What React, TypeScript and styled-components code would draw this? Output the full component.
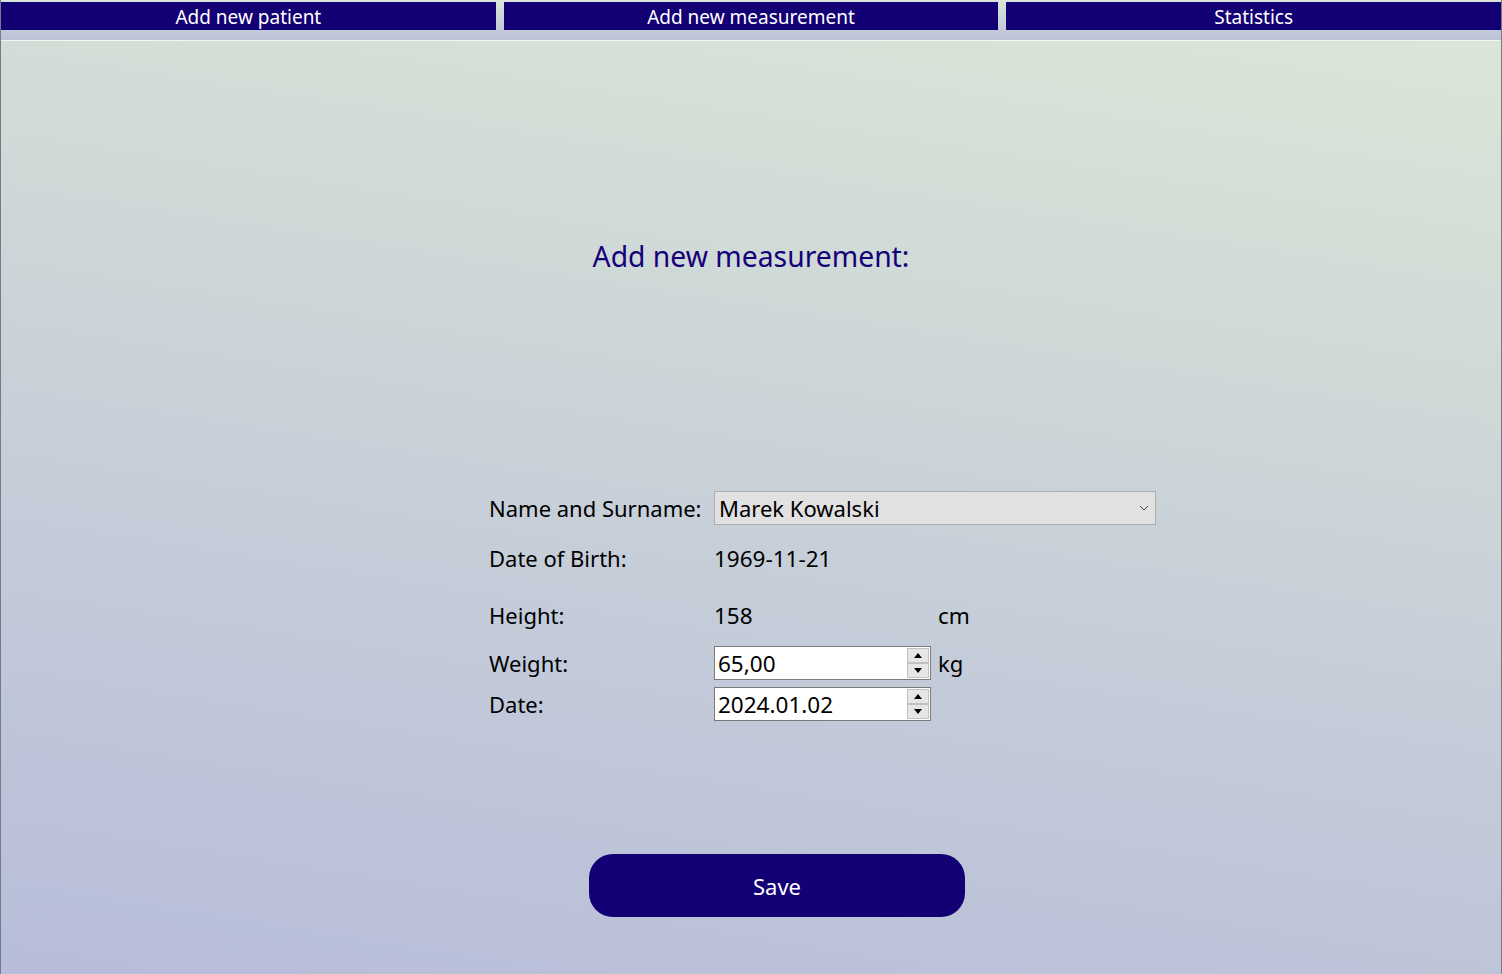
import React from "react";
import styled, { createGlobalStyle } from "styled-components";

const Global = createGlobalStyle`
  html, body { margin: 0; padding: 0; }
  body { font-family: "Noto Sans", "Open Sans", sans-serif; }
  #root { height: 974px; }
`;

const Window = styled.div`
  height: 974px;
  display: flex;
  flex-direction: column;
  border-left: 1px solid #6f7f87;
  border-right: 1px solid #6f7f87;
  box-sizing: border-box;
`;

const Header = styled.div`
  height: 41px;
  box-sizing: border-box;
  padding-top: 2px;
  background: linear-gradient(180deg, #dbe5d9 0%, #c6cedb 60%, #bcc3d6 100%);
  border-bottom: 1px solid #f4f6f4;
  display: grid;
  grid-template-columns: 1fr 1fr 1fr;
  column-gap: 8px;
  align-items: start;
`;

const NavButton = styled.button`
  height: 28px;
  box-sizing: border-box;
  border: none;
  margin: 0;
  padding: 2px 0 0 0;
  background: #130075;
  color: #ffffff;
  font-family: "Noto Sans", "Open Sans", sans-serif;
  font-size: 19px;
  line-height: 26px;
  cursor: pointer;
`;

const Main = styled.main`
  flex: 1;
  background: linear-gradient(189deg, #dbe6d8 0%, #d0dad7 28%, #c5cdd9 58%, #b7bdd9 100%);
  display: flex;
  flex-direction: column;
`;

const Title = styled.h1`
  margin: 197px 0 0 0;
  text-align: center;
  font-family: "Noto Sans", "Open Sans", sans-serif;
  font-weight: 400;
  font-size: 28.3px;
  line-height: 36px;
  color: #15007a;
`;

const Form = styled.div`
  margin: 217px 0 0 488px;
  display: flex;
  flex-direction: column;
`;

const Row = styled.div<{ $top: number; $h?: number }>`
  display: flex;
  align-items: center;
  height: ${(p) => p.$h ?? 34}px;
  margin-top: ${(p) => p.$top}px;
  font-size: 22px;
  color: #000;
`;

const Label = styled.div`
  width: 225px;
  flex: none;
`;

const Value = styled.div<{ $w?: number }>`
  width: ${(p) => (p.$w ? `${p.$w}px` : "auto")};
  flex: none;
  font-size: 22.5px;
`;

const Combo = styled.div`
  width: 442px;
  height: 34px;
  box-sizing: border-box;
  background: #e1e1e1;
  border: 1px solid #adadad;
  display: flex;
  align-items: center;
  justify-content: space-between;
  padding: 0 6px 0 4px;
  font-size: 22px;
`;

const Spin = styled.div`
  width: 217px;
  height: 34px;
  box-sizing: border-box;
  background: #fff;
  border: 1px solid #7a7a7a;
  display: flex;
  align-items: center;
  justify-content: space-between;
  padding: 0 1px 0 3px;
  font-size: 22.5px;
`;

const SpinButtons = styled.div`
  display: flex;
  flex-direction: column;
  width: 22px;
  height: 30px;
`;

const SpinBtn = styled.div`
  flex: 1;
  background: #e6e6e6;
  border: 1px solid #c2c2c2;
  display: flex;
  align-items: center;
  justify-content: center;
  box-sizing: border-box;
`;

const Unit = styled.span`
  margin-left: 7px;
  font-size: 22px;
`;

const SaveButton = styled.button`
  margin: 133px 0 0 588px;
  width: 376px;
  height: 63px;
  border: none;
  border-radius: 24px;
  background: #130075;
  color: #fff;
  font-family: "Noto Sans", "Open Sans", sans-serif;
  font-size: 22px;
  cursor: pointer;
`;

const Chevron = () => (
  <svg width="10" height="6" viewBox="0 0 10 6">
    <path d="M1 1 L5 5 L9 1" fill="none" stroke="#444" strokeWidth="1" />
  </svg>
);

const Tri = ({ up }: { up?: boolean }) => (
  <svg width="8" height="5" viewBox="0 0 8 5">
    {up ? <path d="M0 5 L4 0 L8 5 Z" fill="#000" /> : <path d="M0 0 L8 0 L4 5 Z" fill="#000" />}
  </svg>
);

const Spinner = ({ value }: { value: string }) => (
  <Spin>
    <span>{value}</span>
    <SpinButtons>
      <SpinBtn>
        <Tri up />
      </SpinBtn>
      <SpinBtn>
        <Tri />
      </SpinBtn>
    </SpinButtons>
  </Spin>
);

export default function App() {
  return (
    <>
      <Global />
      <Window>
        <Header>
          <NavButton>Add new patient</NavButton>
          <NavButton>Add new measurement</NavButton>
          <NavButton>Statistics</NavButton>
        </Header>
        <Main>
          <Title>Add new measurement:</Title>
          <Form>
            <Row $top={0}>
              <Label>Name and Surname:</Label>
              <Combo>
                <span>Marek Kowalski</span>
                <Chevron />
              </Combo>
            </Row>
            <Row $top={16}>
              <Label>Date of Birth:</Label>
              <Value>1969-11-21</Value>
            </Row>
            <Row $top={23}>
              <Label>Height:</Label>
              <Value $w={224}>158</Value>
              <Value>cm</Value>
            </Row>
            <Row $top={14}>
              <Label>Weight:</Label>
              <Spinner value="65,00" />
              <Unit>kg</Unit>
            </Row>
            <Row $top={7}>
              <Label>Date:</Label>
              <Spinner value="2024.01.02" />
            </Row>
          </Form>
          <SaveButton>Save</SaveButton>
        </Main>
      </Window>
    </>
  );
}
